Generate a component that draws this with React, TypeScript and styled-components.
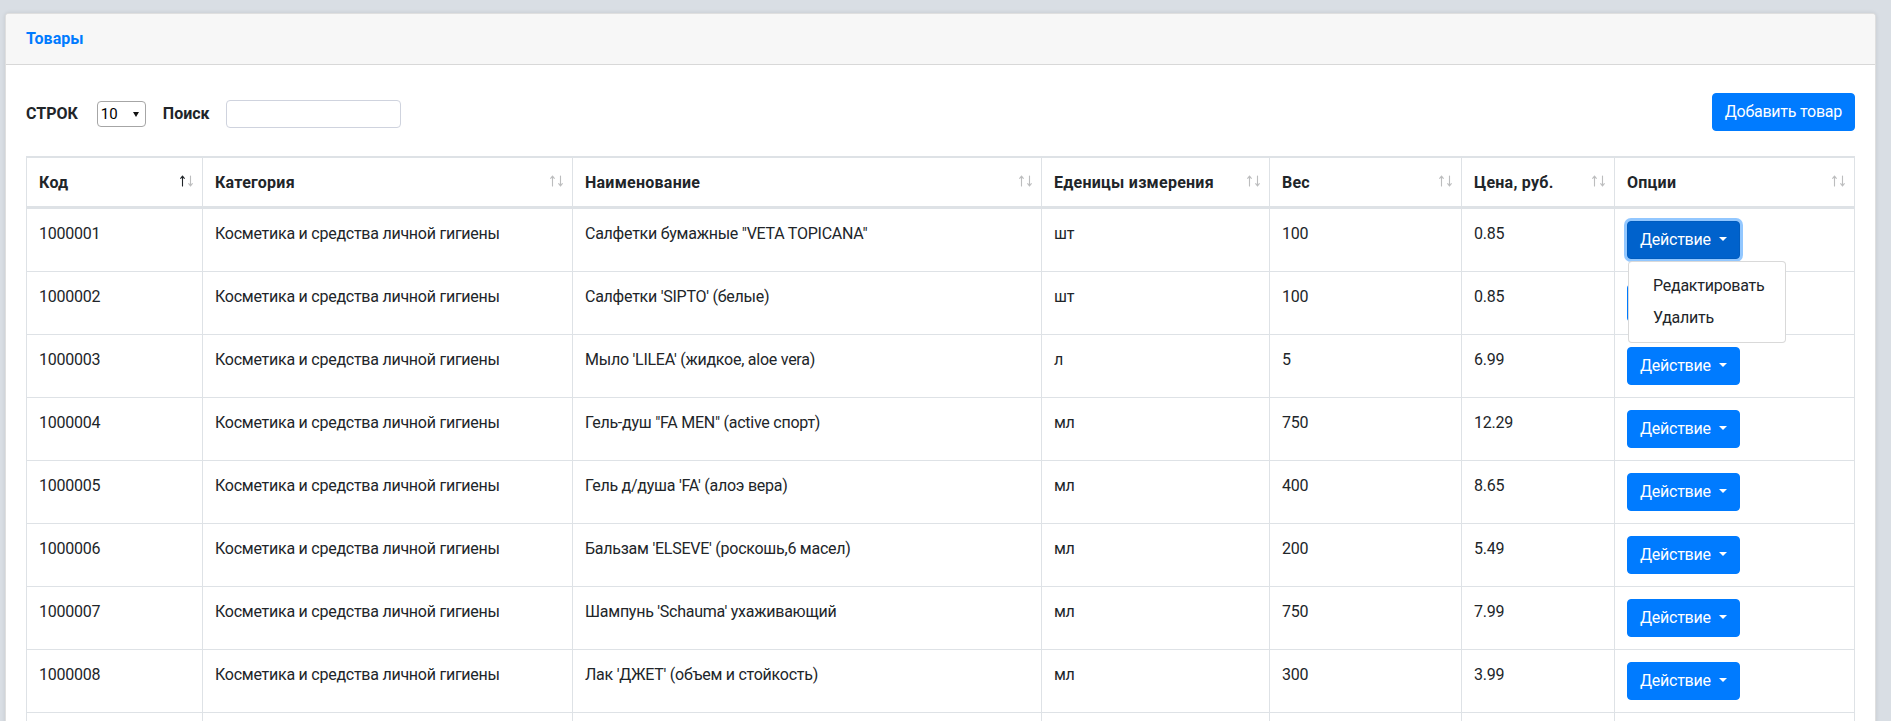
import React from "react";
import styled, { createGlobalStyle, css } from "styled-components";

const GlobalStyle = createGlobalStyle`
  *, *::before, *::after { box-sizing: border-box; }
  html, body { margin: 0; padding: 0; }
  body {
    background: #d9dee4;
    font-family: Roboto, "Noto Sans", "Liberation Sans", sans-serif;
    font-size: 16px;
    line-height: 24px;
    letter-spacing: -0.25px;
    color: #212529;
  }
`;

const Page = styled.div`
  padding: 13px 15px 0 5px;
`;

const Card = styled.section`
  background: #fff;
  border: 1px solid rgba(0, 0, 0, 0.125);
  border-radius: 4px;
  box-shadow: 0 0 4px rgba(0, 0, 0, 0.1);
`;

const CardHeader = styled.header`
  background: #f7f7f7;
  border-bottom: 1px solid rgba(0, 0, 0, 0.125);
  border-radius: 3px 3px 0 0;
  padding: 13px 20px;
`;

const Title = styled.h6`
  margin: 0;
  font-size: 16px;
  line-height: 24px;
  font-weight: 700;
  letter-spacing: 0;
  color: #007bff;
`;

const CardBody = styled.div`
  padding: 28px 20px 20px;
`;

const Toolbar = styled.div`
  display: flex;
  justify-content: space-between;
  align-items: flex-start;
  height: 38px;
  margin-bottom: 25px;
`;

const Filters = styled.div`
  display: flex;
  align-items: center;
  height: 28px;
  margin-top: 7px;
`;

const Label = styled.label<{ $ml?: number; $mr?: number }>`
  font-weight: 700;
  font-size: 16px;
  line-height: 28px;
  letter-spacing: 0;
  margin-left: ${(p) => p.$ml ?? 0}px;
  margin-right: ${(p) => p.$mr ?? 0}px;
`;

const SelectBox = styled.div`
  position: relative;
  width: 49px;
  height: 26px;
`;

const Select = styled.select`
  appearance: none;
  -webkit-appearance: none;
  width: 100%;
  height: 100%;
  border: 1px solid #a6a6a6;
  border-radius: 4px;
  background: #fff;
  padding: 0 0 0 3px;
  font-family: Roboto, "Noto Sans", sans-serif;
  font-size: 15px;
  color: #000;
  outline: none;
`;

const SelectArrow = styled.span`
  position: absolute;
  right: 7px;
  top: 11px;
  width: 0;
  height: 0;
  border-top: 5px solid #111;
  border-left: 3px solid transparent;
  border-right: 3px solid transparent;
  pointer-events: none;
`;

const SearchInput = styled.input`
  width: 175px;
  height: 28px;
  border: 1px solid #cfd3de;
  border-radius: 4px;
  background: #fff;
  padding: 0 6px;
  font-family: Roboto, sans-serif;
  font-size: 15px;
  outline: none;
`;

const PrimaryButton = styled.button<{ $active?: boolean }>`
  display: inline-block;
  font-family: Roboto, "Noto Sans", sans-serif;
  font-size: 16px;
  line-height: 24px;
  letter-spacing: -0.25px;
  font-weight: 400;
  padding: 6px 12px;
  color: #fff;
  background: #007bff;
  border: 1px solid #007bff;
  border-radius: 4px;
  white-space: nowrap;
  cursor: pointer;
  ${(p) =>
    p.$active &&
    css`
      background: #0062cc;
      border-color: #005cbf;
      box-shadow: 0 0 0 3px rgba(38, 143, 255, 0.5);
    `}
`;

const Caret = styled.span`
  display: inline-block;
  margin-left: 8px;
  vertical-align: 0.255em;
  width: 0;
  height: 0;
  border-top: 0.3em solid #fff;
  border-left: 0.3em solid transparent;
  border-right: 0.3em solid transparent;
`;

const Table = styled.table`
  width: 100%;
  table-layout: fixed;
  border-collapse: separate;
  border-spacing: 0;
  border: 1px solid #dee2e6;
`;

const Th = styled.th<{ $w?: number }>`
  position: relative;
  ${(p) => (p.$w ? `width: ${p.$w}px;` : "")}
  padding: 12px 30px 10px 12px;
  line-height: 26px;
  text-align: left;
  vertical-align: bottom;
  font-weight: 700;
  letter-spacing: 0.25px;
  white-space: nowrap;
  border-top: 1px solid #dee2e6;
  border-right: 1px solid #dee2e6;
  border-bottom: 2px solid #dee2e6;
  &:last-child { border-right: 0; }
`;

const Td = styled.td`
  padding: 12px;
  line-height: 26px;
  vertical-align: top;
  border-top: 1px solid #dee2e6;
  border-right: 1px solid #dee2e6;
  &:last-child { border-right: 0; }
`;

const SortMark = styled.svg`
  position: absolute;
  right: 9px;
  bottom: 19px;
  width: 13px;
  height: 12px;
`;

const BtnGroup = styled.div`
  position: relative;
  display: inline-block;
  line-height: 24px;
`;

const Menu = styled.div`
  position: absolute;
  z-index: 10;
  top: calc(100% + 2px);
  left: 1px;
  width: 158px;
  padding: 8px 0;
  background: #fff;
  border: 1px solid rgba(0, 0, 0, 0.15);
  border-radius: 4px;
`;

const MenuItem = styled.div`
  padding: 4px 24px;
  line-height: 24px;
  color: #212529;
  white-space: nowrap;
`;

const SortIcon: React.FC<{ active?: boolean }> = ({ active }) => {
  const up = active ? "#212529" : "rgba(33,37,41,0.3)";
  const down = "rgba(33,37,41,0.3)";
  return (
    <SortMark viewBox="0 0 13 12">
      <g fill="none" strokeWidth="1.1" strokeLinecap="round" strokeLinejoin="round">
        <path d="M2.5 11V1 M0.7 3.4L2.5 1L4.3 3.4" stroke={up} />
        <path d="M10.5 1v10 M8.7 8.6L10.5 11L12.3 8.6" stroke={down} />
      </g>
    </SortMark>
  );
};

const columns = [
  { t: "Код", w: 176, active: true },
  { t: "Категория", w: 370 },
  { t: "Наименование", w: 469 },
  { t: "Еденицы измерения", w: 228 },
  { t: "Вес", w: 192 },
  { t: "Цена, руб.", w: 153 },
  { t: "Опции" },
];

const cat = "Косметика и средства личной гигиены";
const rows = [
  ["1000001", cat, 'Салфетки бумажные "VETA TOPICANA"', "шт", "100", "0.85"],
  ["1000002", cat, "Салфетки 'SIPTO' (белые)", "шт", "100", "0.85"],
  ["1000003", cat, "Мыло 'LILEA' (жидкое, aloe vera)", "л", "5", "6.99"],
  ["1000004", cat, 'Гель-душ "FA MEN" (active спорт)', "мл", "750", "12.29"],
  ["1000005", cat, "Гель д/душа 'FA' (алоэ вера)", "мл", "400", "8.65"],
  ["1000006", cat, "Бальзам 'ELSEVE' (роскошь,6 масел)", "мл", "200", "5.49"],
  ["1000007", cat, "Шампунь 'Schauma' ухаживающий", "мл", "750", "7.99"],
  ["1000008", cat, "Лак 'ДЖЕТ' (объем и стойкость)", "мл", "300", "3.99"],
  ["1000009", cat, "Пена для бритья 'ARKO' (cool)", "мл", "200", "2.49"],
  ["1000010", cat, "Зубная паста 'BLEND-A-MED'", "мл", "100", "1.99"],
];

export default function App() {
  return (
    <>
      <GlobalStyle />
      <Page>
        <Card>
          <CardHeader>
            <Title>Товары</Title>
          </CardHeader>
          <CardBody>
            <Toolbar>
              <Filters>
                <Label $mr={19}>СТРОК</Label>
                <SelectBox>
                  <Select defaultValue="10">
                    <option value="10">10</option>
                    <option value="25">25</option>
                    <option value="50">50</option>
                  </Select>
                  <SelectArrow />
                </SelectBox>
                <Label $ml={17} $mr={16}>Поиск</Label>
                <SearchInput type="text" />
              </Filters>
              <PrimaryButton>Добавить товар</PrimaryButton>
            </Toolbar>
            <Table>
              <thead>
                <tr>
                  {columns.map((c) => (
                    <Th key={c.t} $w={c.w}>
                      {c.t}
                      <SortIcon active={c.active} />
                    </Th>
                  ))}
                </tr>
              </thead>
              <tbody>
                {rows.map((r, i) => (
                  <tr key={r[0]}>
                    {r.map((v, j) => (
                      <Td key={j}>{v}</Td>
                    ))}
                    <Td>
                      <BtnGroup>
                        <PrimaryButton $active={i === 0}>
                          Действие
                          <Caret />
                        </PrimaryButton>
                        {i === 0 && (
                          <Menu>
                            <MenuItem>Редактировать</MenuItem>
                            <MenuItem>Удалить</MenuItem>
                          </Menu>
                        )}
                      </BtnGroup>
                    </Td>
                  </tr>
                ))}
              </tbody>
            </Table>
          </CardBody>
        </Card>
      </Page>
    </>
  );
}
